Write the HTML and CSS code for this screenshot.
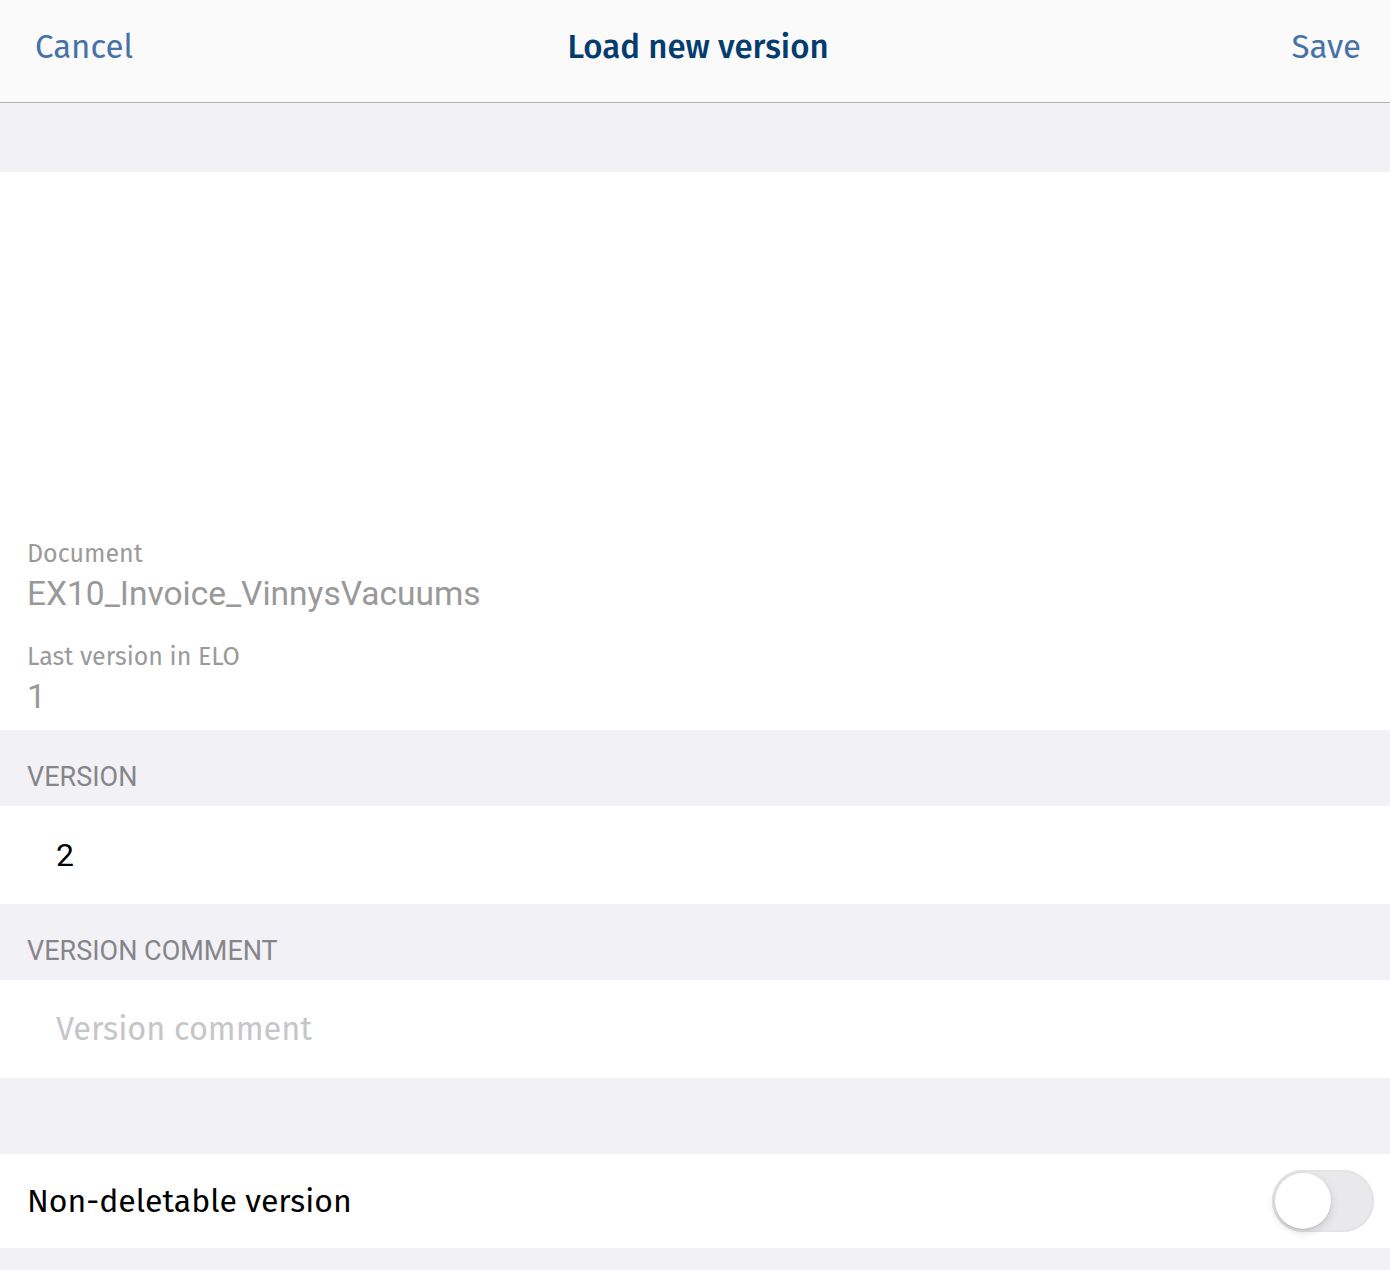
FILE: index.html
```html
<!DOCTYPE html>
<html>
<head>
<meta charset="utf-8">
<link rel="stylesheet" href="styles.css">
</head>
<body>
<div class="page">
  <header class="navbar">
    <span class="nav-btn">Cancel</span>
    <span class="nav-title">Load new version</span>
    <span class="nav-btn">Save</span>
  </header>
  <div class="spacer top"></div>
  <section class="info">
    <div class="field">
      <div class="f-label">Document</div>
      <div class="f-value">EX10_Invoice_VinnysVacuums</div>
    </div>
    <div class="field">
      <div class="f-label">Last version in ELO</div>
      <div class="f-value">1</div>
    </div>
  </section>
  <div class="group-head">VERSION</div>
  <div class="cell input-cell"><span class="input-text">2</span></div>
  <div class="group-head">VERSION COMMENT</div>
  <div class="cell input-cell"><span class="placeholder">Version comment</span></div>
  <div class="spacer mid"></div>
  <div class="cell switch-cell">
    <span class="switch-label">Non-deletable version</span>
    <span class="switch"><span class="knob"></span></span>
  </div>
  <div class="spacer bottom"></div>
</div>
</body>
</html>
```
FILE: styles.css
```css
html, body { margin: 0; padding: 0; }
body { background: #f1f1f6; font-family: "Fira Sans", "Open Sans", "Noto Sans", sans-serif; }
.page { width: 1390px; height: 1270px; overflow: hidden; display: flex; flex-direction: column; }
.navbar {
  height: 103px; box-sizing: border-box; background: #fafafb;
  border-bottom: 1px solid #b0b0b4;
  display: flex; align-items: center; justify-content: space-between;
  padding: 0 29px 8px 35px; position: relative;
}
.nav-btn { color: #4772a8; font-size: 33px; font-weight: 400; }
.nav-title { position: absolute; left: 6px; right: 0; top: 0; line-height: 94px; text-align: center; color: #043c6e; font-size: 33px; font-weight: 500; pointer-events: none; }
.spacer.top { height: 69px; }
.info { background: #fff; height: 558px; box-sizing: border-box; display: flex; flex-direction: column; justify-content: flex-end; padding: 0 27px 11px; }
.field + .field { margin-top: 25px; }
.f-label { color: #9a9a9a; font-size: 25px; line-height: 32px; }
.f-value { color: #999; font-family: Roboto, "Liberation Sans", sans-serif; font-size: 33.5px; line-height: 44px; margin-top: 2px; }
.group-head { height: 76px; box-sizing: border-box; padding: 32px 27px 0; color: #86868a; font-family: Roboto, "Liberation Sans", sans-serif; font-size: 27px; line-height: 30px; }
.cell { background: #fff; display: flex; align-items: center; }
.input-cell { height: 98px; padding: 0 56px; }
.input-text { font-family: Roboto, "Liberation Sans", sans-serif; font-size: 32px; color: #000; }
.placeholder { color: #c6c6c8; font-size: 32.5px; }
.spacer.mid { height: 76px; }
.switch-cell { height: 94px; padding: 0 16px 0 27px; justify-content: space-between; }
.switch-label { font-size: 32px; color: #000; }
.switch { width: 102px; height: 62px; border-radius: 31px; background: #e9e9eb; position: relative; box-shadow: inset 0 0 0 2px #e4e4e6; }
.knob { position: absolute; left: 3px; top: 3px; width: 56px; height: 56px; border-radius: 50%; background: #fff; box-shadow: 0 3px 8px rgba(0,0,0,0.15), 0 1px 1px rgba(0,0,0,0.12); }
.spacer.bottom { flex: 1; }
```
